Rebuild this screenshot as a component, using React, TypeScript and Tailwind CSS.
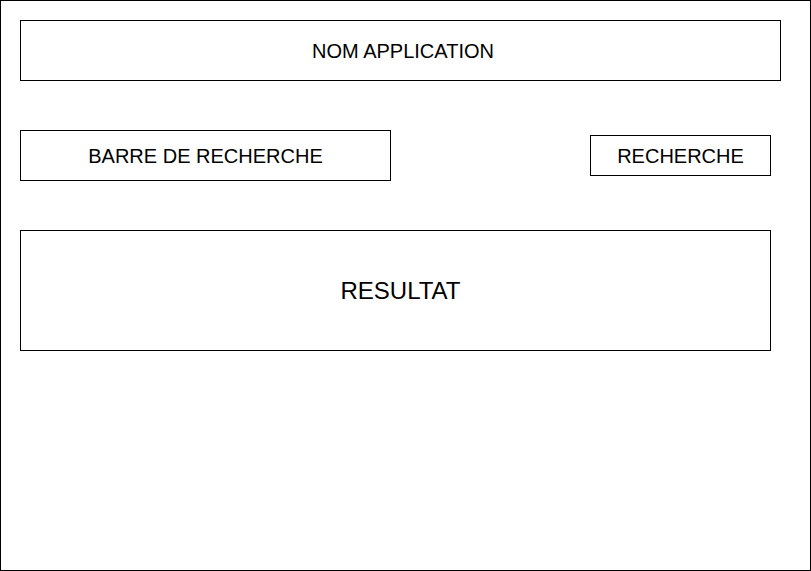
/**
 * Wireframe: app name, search bar + button, result area
 */

function Box({ className, children }: { className: string; children: React.ReactNode }) {
  return (
    <div className={`flex items-center justify-center border border-black bg-white text-black ${className}`}>
      {children}
    </div>
  );
}

export default function App() {
  return (
    <div
      className="w-[811px] h-[571px] border border-black bg-white p-[19px]"
      style={{ fontFamily: '"Liberation Sans", Arial, sans-serif' }}
    >
      <Box className="w-[761px] h-[61px] pl-[5px] text-[20px]">NOM APPLICATION</Box>

      <div className="mt-[49px] flex items-center gap-[199px]">
        <Box className="w-[371px] h-[51px] text-[20px]">BARRE DE RECHERCHE</Box>
        <Box className="w-[181px] h-[41px] text-[20px]">RECHERCHE</Box>
      </div>

      <Box className="mt-[49px] w-[751px] h-[121px] pl-[10px] text-[24px]">RESULTAT</Box>
    </div>
  );
}
